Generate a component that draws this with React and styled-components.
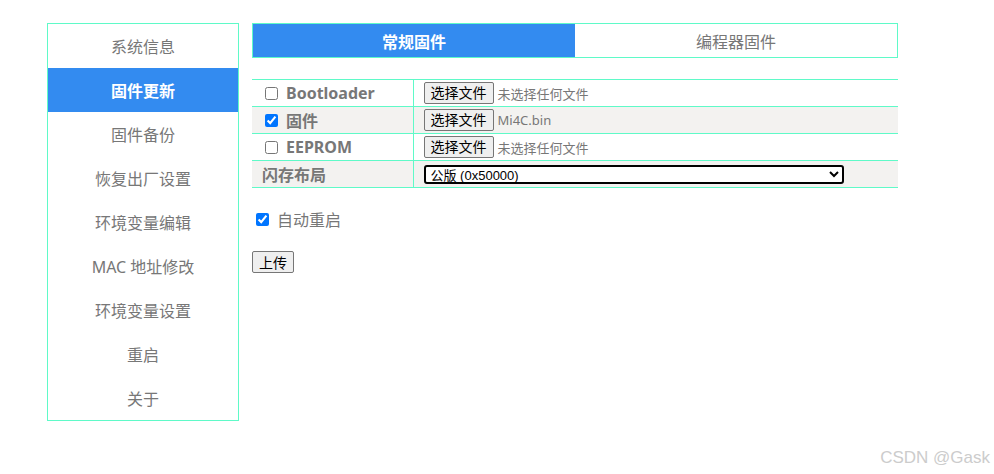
import React from 'react';
import styled, { createGlobalStyle } from 'styled-components';

const GlobalStyle = createGlobalStyle`
  body {
    margin: 0;
    background: #fff;
    font-family: "Noto Sans", "Noto Sans CJK SC", sans-serif;
  }
`;

const line = '#5ffac8';

const menu = ['系统信息', '固件更新', '固件备份', '恢复出厂设置', '环境变量编辑', 'MAC 地址修改', '环境变量设置', '重启', '关于'];

const rows = [
  { label: 'Bootloader', checked: false, file: '' },
  { label: '固件', checked: true, file: 'Mi4C.bin' },
  { label: 'EEPROM', checked: false, file: '' },
];

function App() {
  return (
    <StyledRoot>
      <GlobalStyle />
      <Sidebar>
        {menu.map((m) => (
          <MenuItem key={m} active={m === '固件更新'}>{m}</MenuItem>
        ))}
      </Sidebar>
      <Main>
        <Tabs>
          <Tab active>常规固件</Tab>
          <Tab>编程器固件</Tab>
        </Tabs>
        <Table>
          <tbody>
            {rows.map((r, i) => (
              <Row key={r.label} shaded={i % 2 === 1}>
                <LabelCell>
                  <CheckLabel>
                    <Check type="checkbox" defaultChecked={r.checked} />
                    {r.label}
                  </CheckLabel>
                </LabelCell>
                <ValueCell>
                  <FakeButton>选择文件</FakeButton>
                  <FileName>{r.file || '未选择任何文件'}</FileName>
                </ValueCell>
              </Row>
            ))}
            <Row shaded>
              <LabelCell plain>闪存布局</LabelCell>
              <ValueCell>
                <Select defaultValue="0x50000">
                  <option value="0x50000">公版 (0x50000)</option>
                </Select>
              </ValueCell>
            </Row>
          </tbody>
        </Table>
        <Reboot>
          <Check type="checkbox" defaultChecked />
          自动重启
        </Reboot>
        <UploadButton>上传</UploadButton>
      </Main>
      <Watermark>CSDN @Gask</Watermark>
    </StyledRoot>
  );
}

export default App;

const StyledRoot = styled.div`
  position: relative;
  height: 474px;
  display: flex;
  align-items: flex-start;
  gap: 13px;
  padding: 23px 0 0 47px;
  box-sizing: border-box;
`;

const Sidebar = styled.div`
  width: 192px;
  box-sizing: border-box;
  border: 1px solid ${line};
  display: flex;
  flex-direction: column;
`;

const MenuItem = styled.div`
  height: 44px;
  display: flex;
  align-items: center;
  justify-content: center;
  font-size: 16px;
  font-weight: ${(p) => (p.active ? 700 : 400)};
  color: ${(p) => (p.active ? '#fff' : '#777')};
  background: ${(p) => (p.active ? '#338bf0' : 'transparent')};
`;

const Main = styled.div`
  width: 646px;
  display: flex;
  flex-direction: column;
  align-items: flex-start;
`;

const Tabs = styled.div`
  width: 100%;
  height: 35px;
  box-sizing: border-box;
  border: 1px solid ${line};
  display: flex;
`;

const Tab = styled.div`
  flex: 1;
  display: flex;
  align-items: center;
  justify-content: center;
  font-size: 16px;
  font-weight: ${(p) => (p.active ? 700 : 400)};
  color: ${(p) => (p.active ? '#fff' : '#777')};
  background: ${(p) => (p.active ? '#338bf0' : '#fff')};
`;

const Table = styled.table`
  width: 100%;
  margin-top: 21px;
  border-collapse: collapse;
  border-top: 1px solid ${line};
`;

const Row = styled.tr`
  height: 27px;
  background: ${(p) => (p.shaded ? '#f3f2f0' : '#fff')};
  border-bottom: 1px solid ${line};
`;

const LabelCell = styled.td`
  width: 161px;
  padding: 0 0 0 ${(p) => (p.plain ? '10px' : '13px')};
  box-sizing: border-box;
  border-right: 1px solid ${line};
  font-size: 16px;
  font-weight: 700;
  color: #777;
  white-space: nowrap;
`;

const CheckLabel = styled.label`
  display: flex;
  align-items: center;
  gap: 8px;
`;

const Check = styled.input`
  width: 13px;
  height: 13px;
  margin: 0;
`;

const ValueCell = styled.td`
  padding: 0 0 0 10px;
  font-size: 13px;
  color: #777;
  white-space: nowrap;
`;

const FakeButton = styled.span`
  display: inline-block;
  box-sizing: border-box;
  height: 22px;
  line-height: 20px;
  padding: 0 6px;
  background: #efefef;
  border: 1px solid #767676;
  border-radius: 2px;
  color: #000;
  font-size: 14px;
  vertical-align: middle;
`;

const FileName = styled.span`
  margin-left: 4px;
  vertical-align: middle;
`;

const Select = styled.select`
  width: 420px;
  height: 19px;
  box-sizing: border-box;
  border: 2px solid #000;
  border-radius: 3px;
  background: #fff;
  color: #000;
  font-family: "Liberation Sans", "Noto Sans CJK SC", sans-serif;
  font-size: 13px;
  padding: 0 1px;
  display: block;
`;

const Reboot = styled.label`
  display: flex;
  align-items: center;
  gap: 8px;
  margin: 19px 0 0 4px;
  font-size: 16px;
  color: #777;
`;

const UploadButton = styled.button`
  margin-top: 20px;
  height: 22px;
  padding: 0 6px;
  background: #efefef;
  border: 1px solid #767676;
  border-radius: 2px;
  font-family: "Noto Sans", "Noto Sans CJK SC", sans-serif;
  font-size: 14px;
  color: #000;
`;

const Watermark = styled.div`
  position: absolute;
  right: 4px;
  bottom: 6px;
  font-family: "Liberation Sans", sans-serif;
  font-size: 17px;
  color: #ccc;
`;
